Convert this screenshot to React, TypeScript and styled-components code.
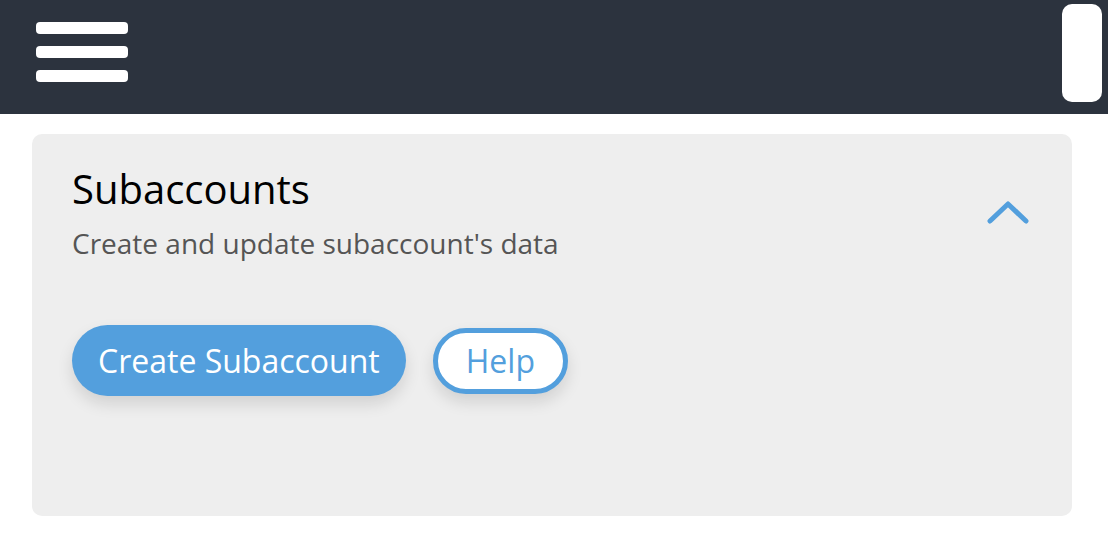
import React from 'react';
import styled, { createGlobalStyle } from 'styled-components';

const GlobalStyle = createGlobalStyle`
  html, body {
    margin: 0;
    padding: 0;
    background: #ffffff;
    font-family: 'Open Sans', 'Noto Sans', sans-serif;
  }
`;

const Header = styled.header`
  height: 114px;
  background-color: #2c333e;
  display: flex;
  align-items: flex-start;
  justify-content: space-between;
  box-sizing: border-box;
  padding: 22px 6px 0 36px;
`;

const Burger = styled.button`
  display: flex;
  flex-direction: column;
  gap: 12px;
  background: none;
  border: none;
  padding: 0;
  cursor: pointer;
`;

const Bar = styled.span`
  display: block;
  width: 92px;
  height: 12px;
  border-radius: 4px;
  background: #ffffff;
`;

const SidePill = styled.div`
  width: 40px;
  height: 98px;
  margin-top: -18px;
  border-radius: 10px;
  background: #ffffff;
`;

const Main = styled.main`
  padding: 20px 36px 0 32px;
`;

const Card = styled.section`
  background: #eeeeee;
  border-radius: 10px;
  height: 382px;
  box-sizing: border-box;
  padding: 31px 40px 0 40px;
`;

const CardHead = styled.div`
  display: flex;
  justify-content: space-between;
  align-items: flex-start;
`;

const Title = styled.h2`
  margin: 0;
  font-size: 40px;
  font-weight: 400;
  line-height: 48px;
  color: #000000;
`;

const Subtitle = styled.p`
  margin: 12px 0 0 0;
  font-size: 28px;
  line-height: 36px;
  color: #555555;
`;

const Toggle = styled.button`
  background: none;
  border: none;
  padding: 0;
  margin: 34px 2px 0 0;
  cursor: pointer;
  display: flex;
`;

const Actions = styled.div`
  display: flex;
  align-items: center;
  gap: 27px;
  margin-top: 64px;
`;

const Button = styled.button<{ $outline?: boolean }>`
  font-family: 'Open Sans', 'Noto Sans', sans-serif;
  font-size: 32px;
  border-radius: 40px;
  cursor: pointer;
  box-shadow: 0 8px 16px rgba(0, 0, 0, 0.12);
  box-sizing: border-box;
  background: ${(p) => (p.$outline ? '#ffffff' : '#539fdd')};
  color: ${(p) => (p.$outline ? '#539fdd' : '#ffffff')};
  border: ${(p) => (p.$outline ? '5px solid #539fdd' : 'none')};
  height: ${(p) => (p.$outline ? '66px' : '71px')};
  padding: ${(p) => (p.$outline ? '0 28px' : '0 26px')};
`;

export default function App() {
  return (
    <>
      <GlobalStyle />
      <Header>
        <Burger aria-label="menu">
          <Bar />
          <Bar />
          <Bar />
        </Burger>
        <SidePill />
      </Header>
      <Main>
        <Card>
          <CardHead>
            <div>
              <Title>Subaccounts</Title>
              <Subtitle>Create and update subaccount's data</Subtitle>
            </div>
            <Toggle aria-label="collapse">
              <svg width="44" height="26" viewBox="0 0 44 26">
                <path d="M4 22 L22 5 L40 22" fill="none" stroke="#539fdd" strokeWidth="5" strokeLinecap="round" strokeLinejoin="round" />
              </svg>
            </Toggle>
          </CardHead>
          <Actions>
            <Button>Create Subaccount</Button>
            <Button $outline>Help</Button>
          </Actions>
        </Card>
      </Main>
    </>
  );
}
